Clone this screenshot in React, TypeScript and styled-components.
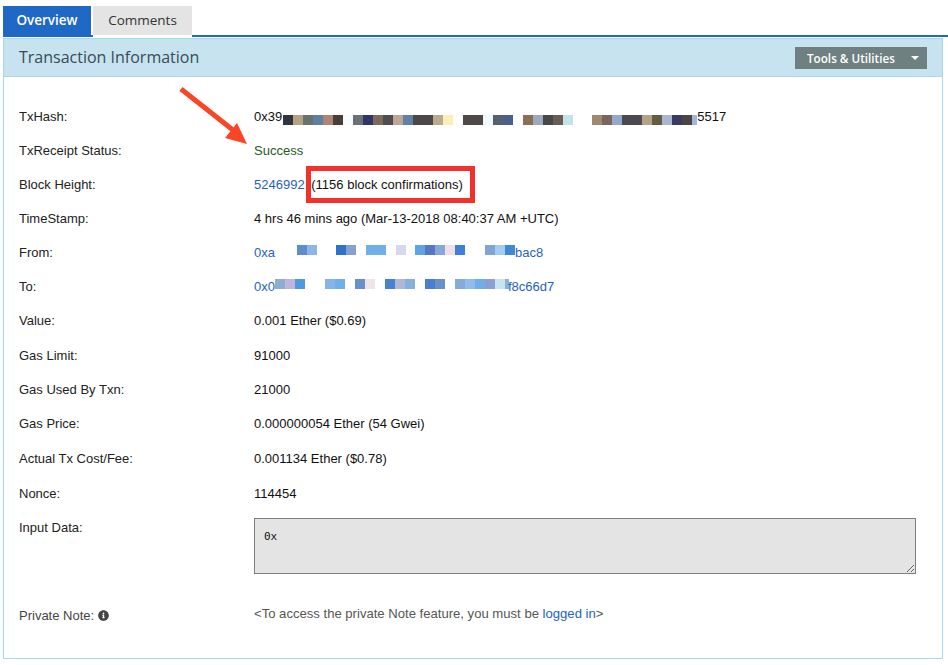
import React from "react";
import styled, { createGlobalStyle } from "styled-components";
import { FaInfoCircle } from "react-icons/fa";

const GlobalStyle = createGlobalStyle`
  html, body {
    margin: 0;
    padding: 0;
    background: #fff;
  }
  body {
    font-family: "Liberation Sans", Arial, sans-serif;
    font-size: 13px;
    color: #111;
  }
`;

const Page = styled.div`
  width: 948px;
  height: 665px;
  padding-top: 6px;
  box-sizing: border-box;
  overflow: hidden;
`;

const TabBar = styled.div`
  display: flex;
  gap: 2px;
  margin-left: 3px;
  height: 29px;
  border-bottom: 2px solid #2068c6;
`;

const Tab = styled.div<{ $active?: boolean }>`
  height: 31px;
  box-sizing: border-box;
  padding-top: 5px;
  text-align: center;
  font-family: "Open Sans", sans-serif;
  font-size: 13.5px;
  font-weight: ${(p) => (p.$active ? 600 : 500)};
  width: ${(p) => (p.$active ? "88px" : "99px")};
  color: ${(p) => (p.$active ? "#fff" : "#333")};
  background: ${(p) => (p.$active ? "#2068c6" : "#e4e4e4")};
  border-bottom: 2px solid ${(p) => (p.$active ? "#2068c6" : "#fff")};
`;

const Panel = styled.section`
  position: relative;
  margin: 1px 5px 0 3px;
  height: 621px;
  box-sizing: border-box;
  border: 1px solid #a0dcea;
`;

const PanelHeading = styled.header`
  display: flex;
  align-items: center;
  justify-content: space-between;
  height: 38px;
  box-sizing: border-box;
  padding: 0 15px;
  background: #c6e3ef;
  border-bottom: 1px solid #a0dcea;
`;

const PanelTitle = styled.h3`
  margin: 0 0 2px;
  font-family: "Open Sans", sans-serif;
  font-size: 16px;
  font-weight: 400;
  color: #3a4a58;
`;

const ToolsButton = styled.button`
  display: flex;
  align-items: center;
  justify-content: space-between;
  width: 132px;
  height: 22px;
  padding: 0 8px 0 12px;
  border: 0;
  background: #6f8080;
  color: #fff;
  font-family: "Open Sans", sans-serif;
  font-size: 11.7px;
  font-weight: 600;
`;

const Caret = styled.span`
  width: 0;
  height: 0;
  border-left: 4px solid transparent;
  border-right: 4px solid transparent;
  border-top: 4px solid #fff;
`;

const Rows = styled.div`
  padding: 23px 26px 0 15px;
`;

const Row = styled.div<{ $height?: number }>`
  display: grid;
  grid-template-columns: 235px 1fr;
  height: ${(p) => p.$height ?? 34}px;
  line-height: 34px;
`;

const Label = styled.div<{ $muted?: boolean }>`
  display: flex;
  align-items: flex-start;
  gap: 4px;
  padding-top: ${(p) => (p.$muted ? "1px" : 0)};
  color: ${(p) => (p.$muted ? "#444" : "#222")};
`;

const Value = styled.div`
  white-space: nowrap;
  color: #111;
`;

const Notice = styled.div`
  margin-top: -1px;
  white-space: nowrap;
  font-size: 13.1px;
  color: #555;
`;

const Link = styled.a`
  color: #1e63c2;
`;

const Success = styled.span`
  color: #1d5c1d;
`;

const Highlight = styled.span`
  position: relative;
  margin-left: 3px;

  &::after {
    content: "";
    position: absolute;
    left: -5px;
    right: -12px;
    top: -11px;
    bottom: -11px;
    border: 5px solid #f3302a;
  }
`;

const Blur = styled.span<{ $drop: number; $after: number }>`
  display: inline-flex;
  height: 10px;
  vertical-align: ${(p) => p.$drop}px;
  margin-right: ${(p) => p.$after}px;
`;

const BlurCell = styled.i<{ $width: number; $color: string }>`
  display: block;
  height: 100%;
  width: ${(p) => p.$width}px;
  background: ${(p) => p.$color};
`;

const InputBox = styled.textarea`
  display: block;
  width: 662px;
  height: 56px;
  margin-top: 7px;
  padding: 11px 9px;
  box-sizing: border-box;
  background: #e4e4e4;
  border: 1px solid #808080;
  border-radius: 0;
  outline: none;
  font-family: "DejaVu Sans Mono", monospace;
  font-size: 11px;
  line-height: 14px;
  color: #111;
`;

const InfoIcon = styled(FaInfoCircle)`
  margin-top: 11px;
  width: 11px;
  height: 11px;
  color: #444;
`;

const Arrow = styled.svg`
  position: absolute;
  left: -4px;
  top: -38px;
  pointer-events: none;
`;

// colour per 10px block, null is a gap, [colour, width] a cut-off block
type Cell = string | null | [string, number];

const hashCells: Cell[] = [
  ["#fff", 1], "#2e3440", "#b3a284", "#6a7270", "#5f7fa3", "#ad8671", "#4a3f38", "#f7fdff",
  "#6c7274", "#2f3566", "#7e6a5c", "#4d4c50", "#bda993", "#6580a8", "#4c4749",
  "#4c4749", "#bcaa8e", "#fdeeb8", null, "#4e4849", "#4e4849", "#effaff",
  "#556070", "#4b5e8c", null, "#8a6f55", "#9fa9bd", "#484848", "#6a5c56",
  "#c4e2e8", null, ["#fff", 9], "#a08870", "#7c6460", "#93a8cc", "#4c4a4e",
  "#4c4a4e", "#b3a284", "#645c44", "#a9b6d0", "#3a3a60", "#4a4442", ["#9fb6d8", 5],
];

const fromCells: Cell[] = [
  ["#fff", 22], "#5f8ccb", "#8bb6e8", null, ["#fff", 9], "#2f72c9", "#87a0cf", null,
  "#6fb0e8", "#6fb0e8", null, "#d6d8ec", ["#fff", 9], "#5fa5e0", "#5577c5",
  "#85a8d8", "#f0e0e6", "#3d80d8", null, null, "#80a4d8", "#a0cdf0", "#3f88d8",
];

const toCells: Cell[] = [
  "#8fadd0", "#c0b5da", "#4f9ade", null, null, "#85b4e8", "#70b0ea", null,
  "#6a90cc", "#f0e4ea", null, "#4a80d0", "#b0b8d8", "#88b0dc", null, "#4a7fd0",
  "#6a90cc", null, "#85acd8", "#90bcec", "#70aeea", "#8a9fd4", "#c8e4ee", ["#88b0e0", 4],
];

const Redacted: React.FC<{ cells: Cell[]; drop?: number; after?: number }> = ({
  cells,
  drop = 2,
  after = 0,
}) => (
  <Blur $drop={drop} $after={after}>
    {cells.map((cell, i) => {
      const color = Array.isArray(cell) ? cell[0] : cell ?? "#fff";
      const width = Array.isArray(cell) ? cell[1] : 10;
      return <BlurCell key={i} $color={color} $width={width} />;
    })}
  </Blur>
);

const plainRows = [
  { label: "Value:", value: "0.001 Ether ($0.69)", height: 35 },
  { label: "Gas Limit:", value: "91000" },
  { label: "Gas Used By Txn:", value: "21000" },
  { label: "Gas Price:", value: "0.000000054 Ether (54 Gwei)", height: 35 },
  { label: "Actual Tx Cost/Fee:", value: "0.001134 Ether ($0.78)", height: 35 },
  { label: "Nonce:", value: "114454" },
];

const App: React.FC = () => (
  <Page>
    <GlobalStyle />
    <TabBar>
      <Tab $active>Overview</Tab>
      <Tab>Comments</Tab>
    </TabBar>
    <Panel>
      <PanelHeading>
        <PanelTitle>Transaction Information</PanelTitle>
        <ToolsButton>
          Tools &amp; Utilities
          <Caret />
        </ToolsButton>
      </PanelHeading>
      <Rows>
        <Row>
          <Label>TxHash:</Label>
          <Value>
            0x39
            <Redacted cells={hashCells} drop={-4} />
            5517
          </Value>
        </Row>
        <Row>
          <Label>TxReceipt Status:</Label>
          <Value>
            <Success>Success</Success>
          </Value>
        </Row>
        <Row>
          <Label>Block Height:</Label>
          <Value>
            <Link>5246992</Link> <Highlight>(1156 block confirmations)</Highlight>
          </Value>
        </Row>
        <Row>
          <Label>TimeStamp:</Label>
          <Value>4 hrs 46 mins ago (Mar-13-2018 08:40:37 AM +UTC)</Value>
        </Row>
        <Row>
          <Label>From:</Label>
          <Value>
            <Link>
              0xa
              <Redacted cells={fromCells} />
              bac8
            </Link>
          </Value>
        </Row>
        <Row>
          <Label>To:</Label>
          <Value>
            <Link>
              0x0
              <Redacted cells={toCells} after={-1} />
              f8c66d7
            </Link>
          </Value>
        </Row>
        {plainRows.map((row) => (
          <Row key={row.label} $height={row.height}>
            <Label>{row.label}</Label>
            <Value>{row.value}</Value>
          </Row>
        ))}
        <Row $height={87}>
          <Label>Input Data:</Label>
          <InputBox readOnly defaultValue="0x" />
        </Row>
        <Row>
          <Label $muted>
            Private Note: <InfoIcon />
          </Label>
          <Notice>
            &lt;To access the private Note feature, you must be <Link>logged in</Link>&gt;
          </Notice>
        </Row>
      </Rows>
      <Arrow width="260" height="190" viewBox="0 0 260 190">
        <path d="M181 88 L238 133" stroke="#fb4527" strokeWidth="5" fill="none" />
        <path d="M247 143 L225 137 L237 122 Z" fill="#fb4527" />
      </Arrow>
    </Panel>
  </Page>
);

export default App;
